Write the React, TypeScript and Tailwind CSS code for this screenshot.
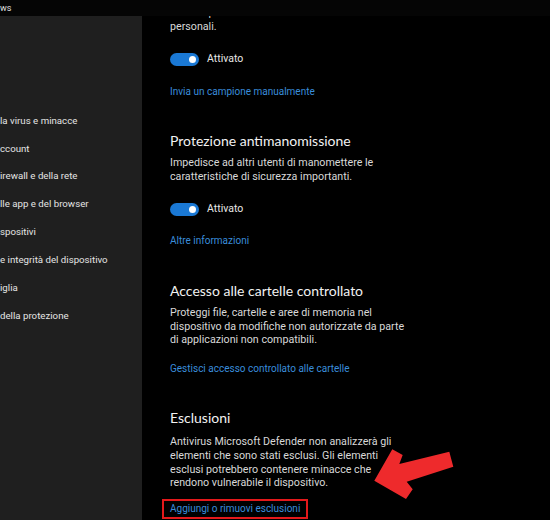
const sans = { fontFamily: "Roboto, 'Noto Sans', sans-serif" };
const headFont = { fontFamily: "Lato, 'Noto Sans', sans-serif" };

const navItems = [
  "la virus e minacce",
  "ccount",
  "irewall e della rete",
  "lle app e del browser",
  "spositivi",
  "e integrità del dispositivo",
  "iglia",
  "della protezione",
];

function Toggle({ label }: { label: string }) {
  return (
    <div className="flex items-center gap-[8px] h-[14px]">
      <div className="w-[29px] h-[13px] rounded-full bg-[#1a78d4] flex items-center justify-end pr-[3px]">
        <div className="w-[7px] h-[7px] rounded-full bg-white" />
      </div>
      <span className="text-[10.5px] leading-[14px] text-[#e8e8e8]">{label}</span>
    </div>
  );
}

function Link({ children }: { children: React.ReactNode }) {
  return <div className="text-[10px] leading-[14px] text-[#3a8ddb] whitespace-nowrap">{children}</div>;
}

function Heading({ children }: { children: React.ReactNode }) {
  return (
    <div className="text-[14px] leading-[20px] text-[#f2f2f2]" style={headFont}>
      {children}
    </div>
  );
}

// body copy, one entry per visual line
function Body({ lines, leading = "leading-[13.7px]" }: { lines: string[]; leading?: string }) {
  return (
    <div className={`text-[10.7px] ${leading} text-[#d8d8d8]`}>
      {lines.map((l) => (
        <div key={l} className="whitespace-nowrap">
          {l}
        </div>
      ))}
    </div>
  );
}

export default function App() {
  return (
    <div className="relative w-[550px] h-[520px] bg-black flex flex-col overflow-hidden" style={sans}>
      {/* Title bar */}
      <div className="h-[16px] shrink-0 bg-[#050505] flex items-center relative z-10">
        <span className="text-[9px] leading-none text-[#e0e0e0]">ws</span>
      </div>

      <div className="flex flex-1 min-h-0">
        {/* Sidebar */}
        <nav className="w-[142px] shrink-0 bg-[#1f1f1f] pt-[91px] flex flex-col">
          {navItems.map((item) => (
            <div key={item} className="h-[27.9px] flex items-center text-[9.7px] text-[#e4e4e4] whitespace-nowrap">
              {item}
            </div>
          ))}
        </nav>

        {/* Content */}
        <main className="flex-1 overflow-hidden pl-[28px]">
          <div className="-mt-[10px] flex flex-col">
            <Body lines={["se il file potrebbe contenere informazioni", "personali."]} leading="leading-[14px]" />
            <div className="mt-[18px]">
              <Toggle label="Attivato" />
            </div>
            <div className="mt-[19px]">
              <Link>Invia un campione manualmente</Link>
            </div>

            <div className="mt-[32px]">
              <Heading>Protezione antimanomissione</Heading>
            </div>
            <div className="mt-[5px]">
              <Body
                leading="leading-[14px]"
                lines={["Impedisce ad altri utenti di manomettere le", "caratteristiche di sicurezza importanti."]}
              />
            </div>
            <div className="mt-[18px]">
              <Toggle label="Attivato" />
            </div>
            <div className="mt-[18px]">
              <Link>Altre informazioni</Link>
            </div>

            <div className="mt-[33px]">
              <Heading>Accesso alle cartelle controllato</Heading>
            </div>
            <div className="mt-[5px]">
              <Body
                lines={[
                  "Proteggi file, cartelle e aree di memoria nel",
                  "dispositivo da modifiche non autorizzate da parte",
                  "di applicazioni non compatibili.",
                ]}
              />
            </div>
            <div className="mt-[15px]">
              <Link>Gestisci accesso controllato alle cartelle</Link>
            </div>

            <div className="mt-[32px]">
              <Heading>Esclusioni</Heading>
            </div>
            <div className="mt-[7px]">
              <Body
                lines={[
                  "Antivirus Microsoft Defender non analizzerà gli",
                  "elementi che sono stati esclusi. Gli elementi",
                  "esclusi potrebbero contenere minacce che",
                  "rendono vulnerabile il dispositivo.",
                ]}
              />
            </div>
            <div className="mt-[9px] flex">
              <div className="-ml-[8px] px-[6px] py-[1px] border-2 border-[#e3191b]">
                <Link>Aggiungi o rimuovi esclusioni</Link>
              </div>
            </div>
          </div>
        </main>
      </div>

      {/* red annotation arrow */}
      <svg width="90" height="60" viewBox="0 0 90 60" className="absolute left-[370px] top-[445px]">
        <polygon
          points="4.3,35.7 22.3,4.3 32.7,10 29.3,19 79.3,6.7 83.3,21.7 36.7,36.7 42.7,44.3 36,54"
          fill="#ee2a2c"
        />
      </svg>
    </div>
  );
}
